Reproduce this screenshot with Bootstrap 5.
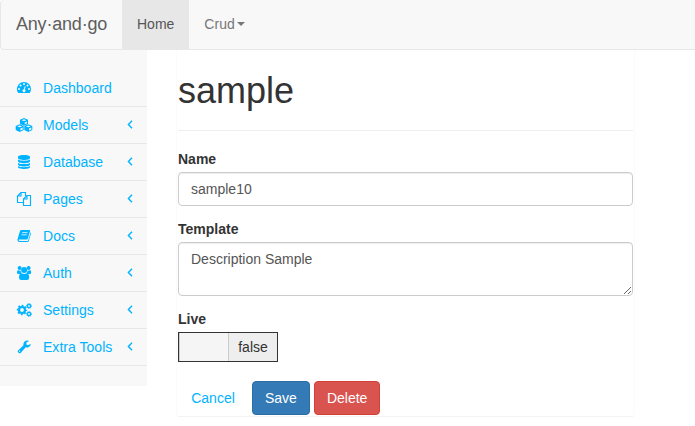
<!DOCTYPE html>
<html lang="en">
<head>
<meta charset="utf-8">
<meta name="viewport" content="width=device-width, initial-scale=1">
<title>Any·and·go</title>
<link href="https://cdn.jsdelivr.net/npm/bootstrap@5.3.0/dist/css/bootstrap.min.css" rel="stylesheet">
<style>
body{font-family:"Liberation Sans",Arial,sans-serif;font-size:14px;line-height:20px;color:#333;background:#fff;overflow:hidden}
.topbar{height:50px;background:#f8f8f8;border:1px solid #e7e7e7;border-top:0;border-right:0;border-radius:4px 0 0 4px}
.topbar .navbar-brand{font-size:18px;line-height:20px;color:#5e5e5e;width:121px;padding:14px 0 15px 15px;letter-spacing:-.2px}
.topbar .navbar-nav .nav-link{color:#777;padding:14px 15px 15px;line-height:20px}
.topbar .navbar-nav .nav-link.active{background:#e7e7e7;color:#555}
.topbar .dropdown-toggle::after{margin-left:2px;vertical-align:3px;border-top-width:4px;border-left-width:4px;border-right-width:4px}
.sidebar{width:147px;height:336px;background:#f8f8f8;padding-top:20px}
.sidebar .nav-link{height:37px;padding:8px 14px 8px 15px;color:#00b3ff;border-bottom:1px solid #e7e7e7;line-height:20px;letter-spacing:.03px}
.sidebar .menu-icon{width:18px;height:14px;margin-right:10px;margin-top:3px;fill:currentColor}
.sidebar .arrow{width:6px;height:9px;margin-top:5px;fill:none;stroke:currentColor;stroke-width:1.4}
.form-panel{width:459px;height:367px;margin-left:29px;padding:0 1px;border:1px solid #fbfbfb;border-top:0;border-bottom-color:#f3f3f3;border-radius:0 0 4px 4px}
.form-panel h1{font-size:36px;line-height:40px;font-weight:400;margin:0 0 18px;padding:21px 0 19px;height:81px;border-bottom:1px solid #eee}
.form-panel label{font-weight:700;line-height:20px;height:20px;margin-bottom:3px}
.form-panel .form-control{font-size:14px;line-height:20px;color:#555;border-color:#ccc;border-radius:4px;padding:6px 12px;margin-bottom:13px;box-shadow:inset 0 1px 1px rgba(0,0,0,.075)}
.name-field{height:34px}
.form-panel textarea.form-control{height:54px;min-height:54px;overflow:hidden}
.switch{width:100px;height:30px;border:1px solid #333;background:#f5f5f5;line-height:28px;margin-bottom:19px}
.switch-handle{width:50px;border-right:1px solid #ccc;border-left:1px solid #ccc}
.switch-text{width:48px;background:#eee;color:#333}
.form-panel .btn{font-size:14px;line-height:20px;padding:6px 12px;border-radius:4px}
.btn-save{background:#337ab7;border-color:#2e6da4;color:#fff}
.btn-delete{background:#d9534f;border-color:#d43f3a;color:#fff}
.btn-cancel{color:#00b3ff;width:70px}
</style>
</head>
<body>
<nav class="topbar navbar navbar-expand p-0 align-items-stretch">
  <a class="navbar-brand m-0" href="#">Any·and·go</a>
  <ul class="navbar-nav">
    <li class="nav-item"><a class="nav-link active" href="#">Home</a></li>
    <li class="nav-item"><a class="nav-link dropdown-toggle" href="#">Crud</a></li>
  </ul>
</nav>
<div class="d-flex align-items-start">
  <aside class="sidebar flex-shrink-0">
    <nav class="nav flex-column flex-nowrap">
      <a class="nav-link d-flex" href="#"><svg class="menu-icon" viewBox="0 0 18 14"><path fill-rule="evenodd" d="M9 1a7 7 0 0 1 7 7q0 2.1-1.1 3.8-.2.2-.5.2H3.6q-.3 0-.5-.2A7 7 0 0 1 9 1zM4 7a1 1 0 1 0 0 2 1 1 0 0 0 0-2zM5.5 3.5a1 1 0 1 0 0 2 1 1 0 0 0 0-2zM9 2a1 1 0 1 0 0 2 1 1 0 0 0 0-2zM12.5 3.5a1 1 0 1 0 0 2 1 1 0 0 0 0-2zM14 7a1 1 0 1 0 0 2 1 1 0 0 0 0-2zM9.7 5.2l-.8 3a1.5 1.5 0 1 0 1 .3l.8-3z"/></svg><span>Dashboard</span></a>
      <a class="nav-link d-flex" href="#"><svg class="menu-icon" viewBox="0 0 18 14"><g id="cube"><path d="M9 0l4 1.700v4.200L9 7.800 5 5.900V1.700z"/><path d="M6.600 2.200L9 1.300l2.400.9L9 3.100zM9.700 4.400L12 3.400v1.800L9.700 6.300z" fill="#f8f8f8"/></g><use href="#cube" x="-4.300" y="6.200"/><use href="#cube" x="4.300" y="6.200"/></svg><span class="flex-grow-1">Models</span><svg class="arrow" viewBox="0 0 6 9"><path d="M5 .8L1.400 4.500 5 8.200"/></svg></a>
      <a class="nav-link d-flex" href="#"><svg class="menu-icon" viewBox="0 0 18 14"><path d="M3 2c0-2.600 12-2.600 12 0v1c0 2.600-12 2.600-12 0zM3 4.600c2 1.600 10 1.600 12 0v1.700c0 2.600-12 2.600-12 0zM3 7.900c2 1.600 10 1.600 12 0v1.700c0 2.600-12 2.600-12 0zM3 11.100c2 1.600 10 1.600 12 0V12c0 2.600-12 2.600-12 0z"/></svg><span class="flex-grow-1">Database</span><svg class="arrow" viewBox="0 0 6 9"><path d="M5 .8L1.400 4.500 5 8.200"/></svg></a>
      <a class="nav-link d-flex" href="#"><svg class="menu-icon" viewBox="0 0 18 14"><path fill="none" stroke="currentColor" stroke-width="1.150" d="M8.500 10.500h-6V4L6 .5h4.500V4M6 .5V4H2.500M8.500 7L12 3.500h3.500v10h-7zM12 3.500V7H8.500"/></svg><span class="flex-grow-1">Pages</span><svg class="arrow" viewBox="0 0 6 9"><path d="M5 .8L1.400 4.500 5 8.200"/></svg></a>
      <a class="nav-link d-flex" href="#"><svg class="menu-icon" viewBox="0 0 18 14"><path d="M6.300 1h8q1 0 .8 1l-2.300 7.800q-.2.8-1.100.8H4.100q-.6 0-.5.5.1.8 1 .8h7.800q.6 0 .8-.6l2.500-8.100q.6.4.4 1.100l-2.300 7.600q-.3 1.100-1.500 1.100H4.500Q2.600 13 2.400 11q0-.5.2-1L4.900 2.200Q5.300 1 6.300 1z"/><path d="M7.200 3.600h5.300M6.500 5.800h5.300" stroke="#f8f8f8" stroke-width=".8"/></svg><span class="flex-grow-1">Docs</span><svg class="arrow" viewBox="0 0 6 9"><path d="M5 .8L1.400 4.500 5 8.200"/></svg></a>
      <a class="nav-link d-flex" href="#"><svg class="menu-icon" viewBox="0 0 18 14"><circle cx="4.600" cy="2" r="2"/><circle cx="13.600" cy="2" r="2"/><circle cx="9.100" cy="4" r="3"/><path d="M3 4q1.500 1 2.600.4.1 1.500 1 2.600-1.200 0-2 1H3.200Q2 8 2 6.800 2 4.500 3 4zM15.200 4q-1.500 1-2.600.4-.1 1.500-1 2.600 1.200 0 2 1H15q1.200 0 1.200-1.200 0-2.300-1-2.800zM6.500 7q2.600 1.800 5.200 0 2.300 0 2.500 4.500Q14.200 14 12 14H6.200Q4 14 4 11.500 4.200 7 6.500 7z"/></svg><span class="flex-grow-1">Auth</span><svg class="arrow" viewBox="0 0 6 9"><path d="M5 .8L1.400 4.500 5 8.200"/></svg></a>
      <a class="nav-link d-flex" href="#"><svg class="menu-icon" viewBox="0 0 18 14"><g fill="none" stroke="currentColor"><circle cx="7" cy="7" r="3" stroke-width="2.200"/><circle cx="7" cy="7" r="4.400" stroke-width="1.600" stroke-dasharray="1.750 1.705" stroke-dashoffset=".87"/><circle cx="14" cy="3" r="1.600" stroke-width="1.400"/><circle cx="14" cy="3" r="2.500" stroke-width=".9" stroke-dasharray="1 .963"/><circle cx="14" cy="11" r="1.600" stroke-width="1.400"/><circle cx="14" cy="11" r="2.500" stroke-width=".9" stroke-dasharray="1 .963"/></g></svg><span class="flex-grow-1">Settings</span><svg class="arrow" viewBox="0 0 6 9"><path d="M5 .8L1.400 4.500 5 8.200"/></svg></a>
      <a class="nav-link d-flex" href="#"><svg class="menu-icon" viewBox="0 0 18 14"><path fill-rule="evenodd" d="M13.700 1.200L11.400 2.600v1.800l1.600.9 2.400-1.400q.4 0 .3.600a3.800 3.800 0 0 1-5 2.800l-5.100 5.600q-1 .9-1.900 0l-.7-.8q-.8-.9.100-1.700l5.400-5.200A3.800 3.800 0 0 1 13.400.7q.5.200.3.500zM4.600 10.600a.6.600 0 1 0 0 1.200.6.600 0 0 0 0-1.200z"/></svg><span class="flex-grow-1 text-nowrap">Extra Tools</span><svg class="arrow" viewBox="0 0 6 9"><path d="M5 .8L1.400 4.500 5 8.200"/></svg></a>
    </nav>
  </aside>
  <main class="form-panel flex-shrink-0">
    <h1>sample</h1>
    <form class="d-flex flex-column">
      <label for="name">Name</label>
      <input class="form-control name-field" id="name" type="text" value="sample10">
      <label for="template">Template</label>
      <textarea class="form-control" id="template">Description Sample</textarea>
      <label>Live</label>
      <div class="switch d-flex">
        <div class="switch-handle"></div>
        <div class="switch-text text-center">false</div>
      </div>
      <div class="d-flex gap-1">
        <a class="btn btn-cancel" href="#">Cancel</a>
        <button class="btn btn-save" type="button">Save</button>
        <button class="btn btn-delete" type="button">Delete</button>
      </div>
    </form>
  </main>
</div>
</body>
</html>
